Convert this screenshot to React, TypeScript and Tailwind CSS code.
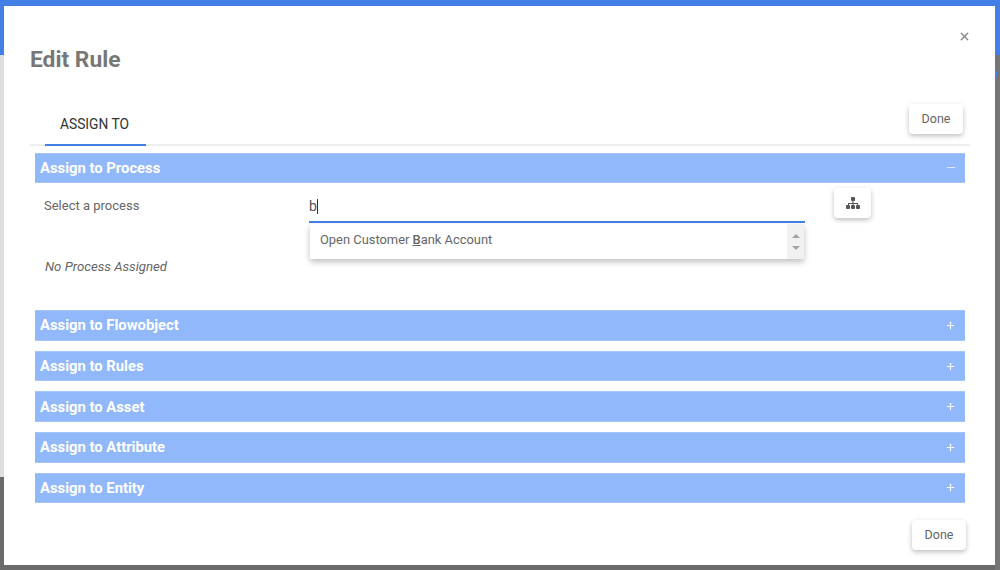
import { Plus, X } from "lucide-react";

const closedSections = [
  "Assign to Flowobject",
  "Assign to Rules",
  "Assign to Asset",
  "Assign to Attribute",
  "Assign to Entity",
];

function DoneButton() {
  return (
    <button className="w-[54px] h-[30px] bg-white rounded-sm text-[12.5px] text-[#666] shadow-[0_2px_5px_rgba(0,0,0,0.26)]">
      Done
    </button>
  );
}

function SectionBar({ label, icon }: { label: string; icon: React.ReactNode }) {
  return (
    <div className="h-[30.6px] ml-[5px] mr-[4px] pl-[5px] bg-[#90b8fa] flex items-center justify-between text-white text-[14.8px] font-bold border-y border-[#a6c6fb]">
      <span>{label}</span>
      <span className="w-[29px] flex justify-center">{icon}</span>
    </div>
  );
}

function SitemapIcon() {
  return (
    <svg width="14" height="12" viewBox="0 0 14 12" fill="currentColor">
      <rect x="5" y="0" width="4" height="4" rx="1" />
      <path d="M6.5 4h1v2H12v2h-1V7H7.5v1h-1V7H3v1H2V6h4.5z" />
      <rect x="0" y="8" width="4" height="4" rx="1" />
      <rect x="5" y="8" width="4" height="4" rx="1" />
      <rect x="10" y="8" width="4" height="4" rx="1" />
    </svg>
  );
}

export default function App() {
  return (
    <div className="relative w-[1000px] h-[570px] overflow-hidden bg-[#6b6b6b] font-['Roboto',sans-serif]">
      {/* page behind the dialog */}
      <div className="h-[55px] bg-[#4280e8]" />
      <div className="w-[1000px] h-[422px] bg-[#dedede]" />
      <div className="absolute top-[55px] right-0 w-[5px] h-[515px] bg-[#757575]" />
      <div className="absolute top-[70px] left-[995px] w-[2px] h-[8px] rounded-r-sm bg-[#4280e8]" />

      {/* dialog */}
      <div className="absolute left-[4px] top-[6px] w-[991px] h-[559px] bg-white pl-[26px] pr-[26px] flex flex-col">
        <div className="flex justify-between items-start h-[90px] pt-[39px]">
          <h2 className="text-[22.8px] leading-[28px] font-bold text-[#777] mt-[1px]">Edit Rule</h2>
          <X size={13} strokeWidth={2.5} className="text-[#888] mt-[-15px] mr-[-2px]" />
        </div>

        <div className="h-[50px] flex justify-between border-b-2 border-[#eeeeee] mr-[-1px]">
          <div className="w-[101px] ml-[15px] h-[50px] border-b-2 border-[#4280e8] text-[13.8px] text-[#333] flex items-center justify-center pt-[8px] pr-[2px]">
            ASSIGN TO
          </div>
          <div className="mr-[7px] mt-[8px]">
            <DoneButton />
          </div>
        </div>

        <div className="mt-[6.7px]">
          <SectionBar
            label="Assign to Process"
            icon={<span className="block w-[8px] h-[1px] bg-[#dce8fd]" />}
          />

          <div className="h-[127px] relative text-[13px] text-[#666]">
            <div className="absolute left-[14px] top-[12.5px] text-[13px]">Select a process</div>
            <div className="absolute left-[279px] top-[5px] w-[496px] h-[35px] border-b-2 border-[#4280e8] pt-[9px] text-[14px] leading-[18px] text-[#555]">
              b<span className="inline-block w-px h-[15px] bg-[#333] align-[-3px]" />
            </div>
            <div className="absolute left-[804px] top-[5px] w-[37px] h-[30px] bg-white rounded-sm shadow-[0_2px_5px_rgba(0,0,0,0.26)] flex items-center justify-center text-[#555]">
              <SitemapIcon />
            </div>

            {/* autocomplete dropdown */}
            <div className="absolute left-[280px] top-[41px] w-[494px] h-[35px] bg-white shadow-[0_3px_6px_rgba(0,0,0,0.25)] flex justify-between">
              <span className="pl-[10px] pt-[6px] text-[12.9px] text-[#666]">
                Open Customer <b className="font-medium underline">B</b>ank Account
              </span>
              <div className="w-[17px] bg-[#f1f1f1] flex flex-col items-center justify-center gap-[8px]">
                <span className="w-0 h-0 border-x-[4px] border-x-transparent border-b-[4px] border-b-[#a3a3a3]" />
                <span className="w-0 h-0 border-x-[4px] border-x-transparent border-t-[4px] border-t-[#a3a3a3]" />
              </div>
            </div>

            <div className="absolute left-[15px] top-[73.5px] text-[13.2px] italic text-[#666]">
              No Process Assigned
            </div>
          </div>

          <div className="flex flex-col gap-[10px]">
            {closedSections.map((s) => (
              <SectionBar key={s} label={s} icon={<Plus size={11} strokeWidth={2.5} />} />
            ))}
          </div>
        </div>

        <div className="flex justify-end mt-[16.7px] mr-[3px]">
          <DoneButton />
        </div>
      </div>
    </div>
  );
}
